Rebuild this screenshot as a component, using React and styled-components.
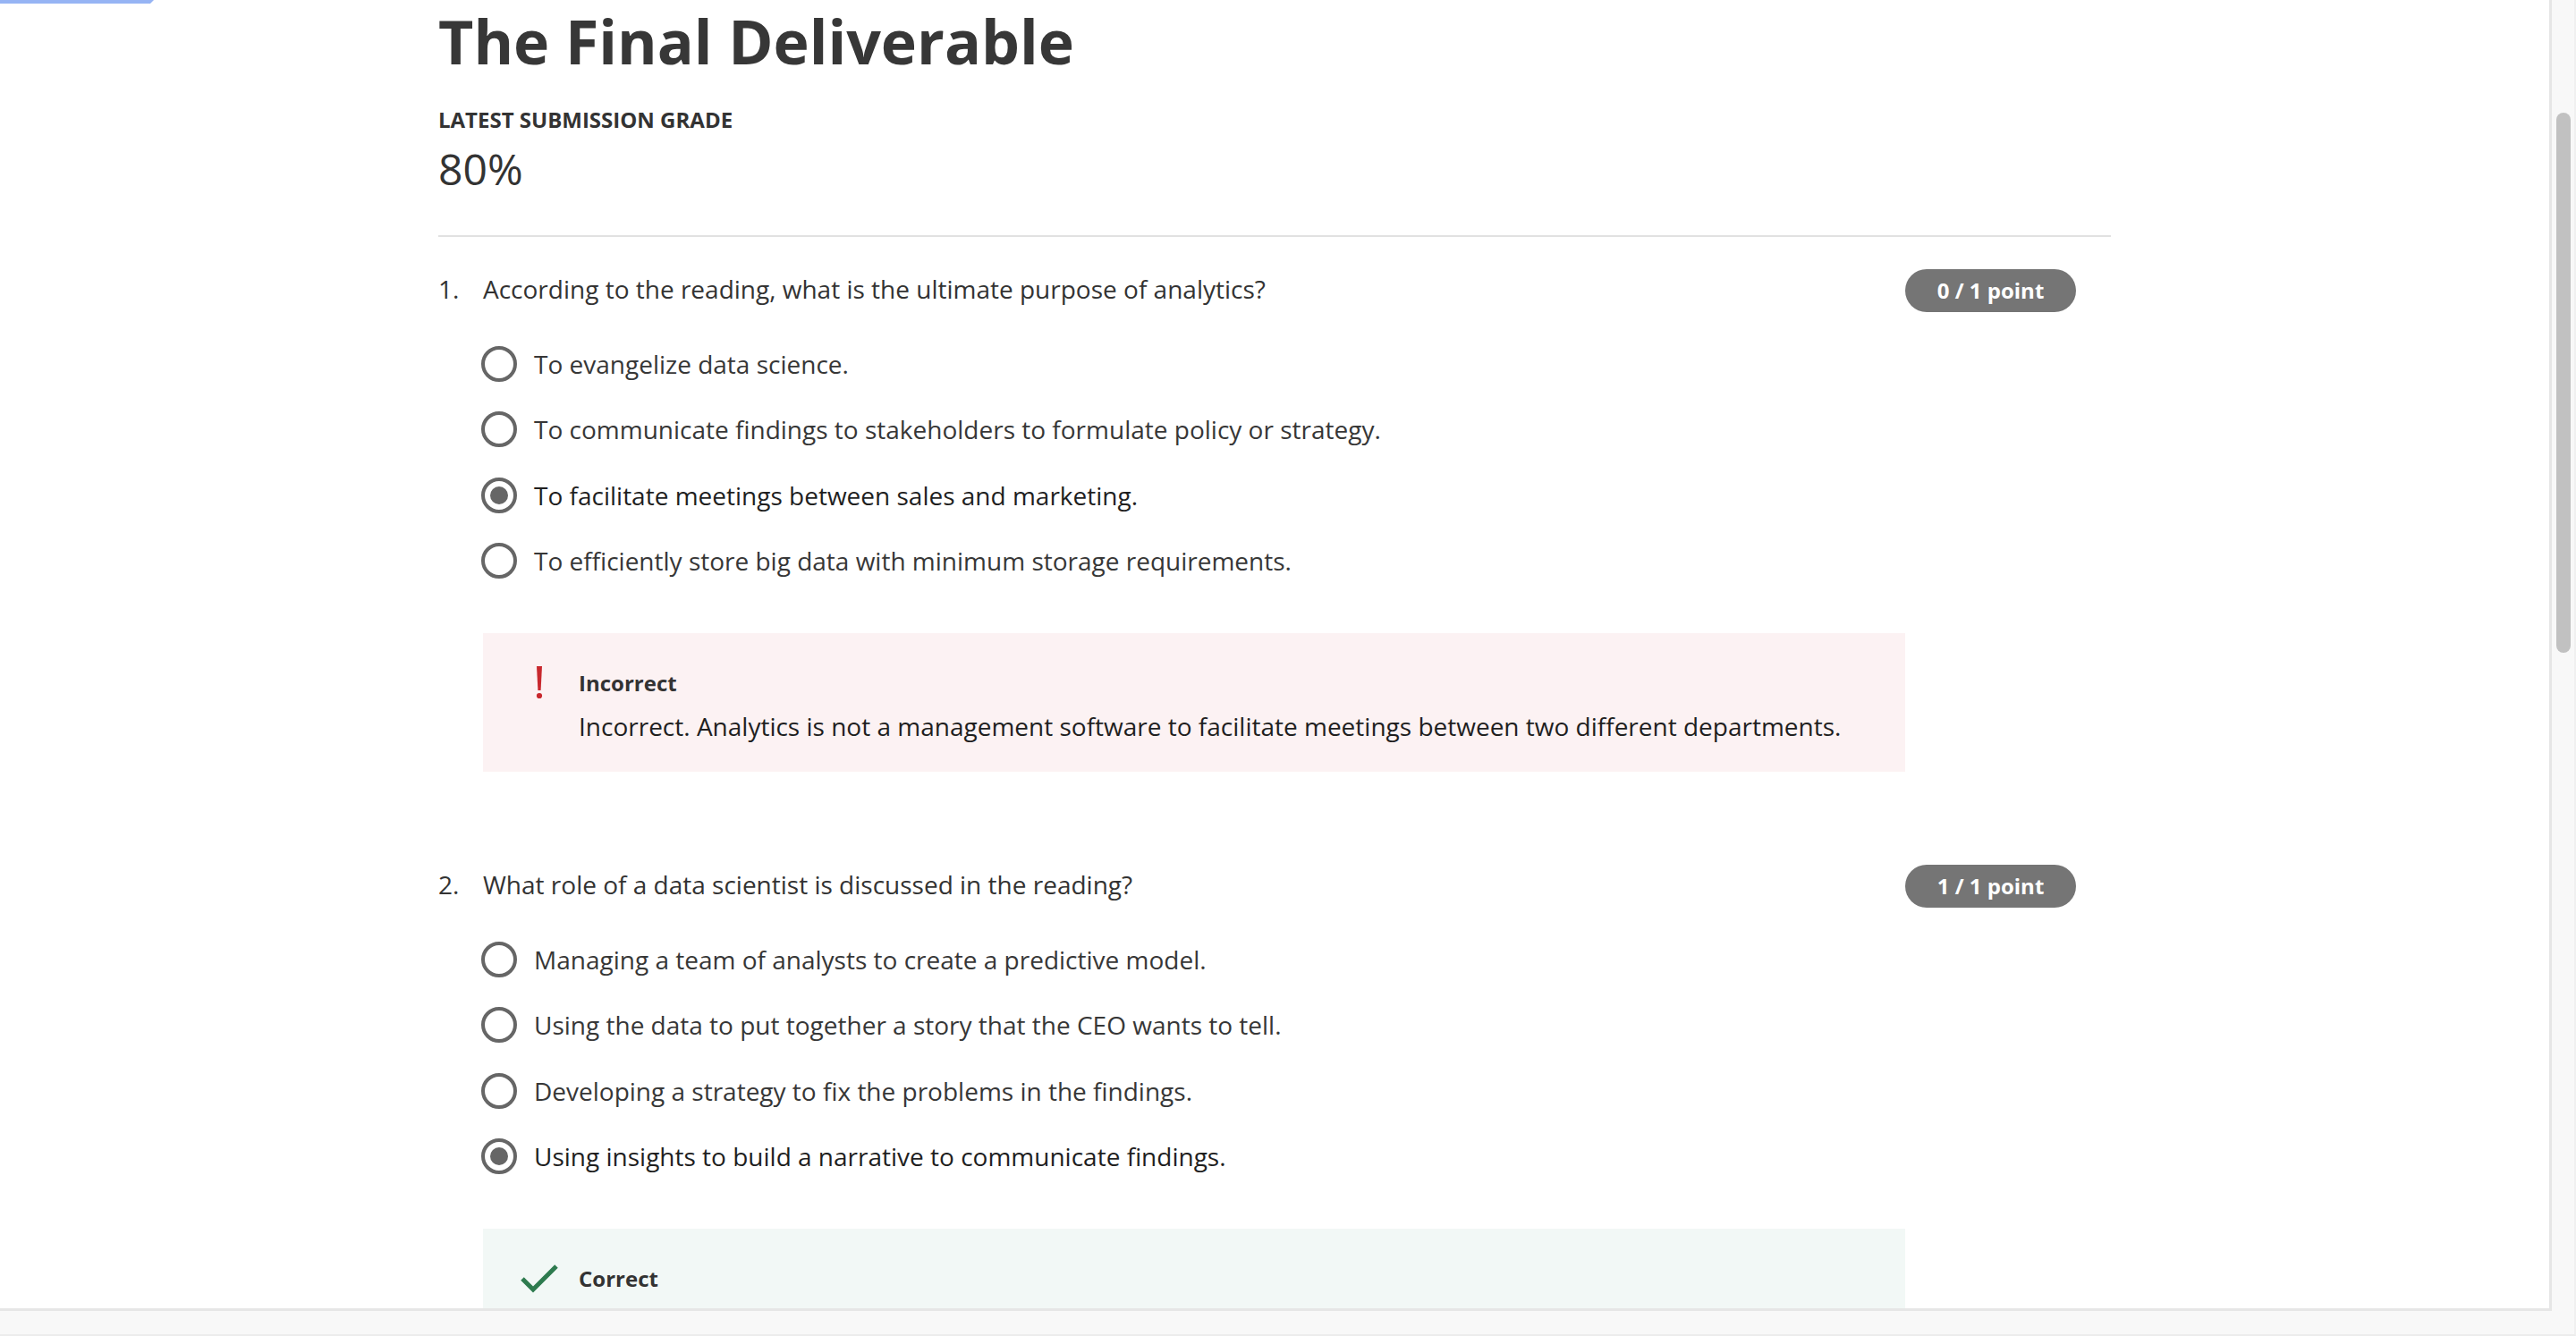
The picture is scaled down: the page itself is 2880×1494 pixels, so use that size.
import React from "react";
import styled, { createGlobalStyle } from "styled-components";

const Global = createGlobalStyle`
  html, body { margin: 0; padding: 0; background: #f8f8f8; }
  body { font-family: "Open Sans", "Liberation Sans", Arial, sans-serif; overflow: hidden; }
  * { box-sizing: border-box; }
`;

const Page = styled.div`
  position: relative;
  width: 2880px;
  height: 1494px;
  display: grid;
  grid-template-columns: 2853px 1fr;
  grid-template-rows: 1466px 1fr;
  background: #f8f8f8;
  border-right: 2px solid #f0f0f0;
  border-bottom: 2px solid #ececec;
`;

const FocusBar = styled.div`
  position: absolute;
  top: 0;
  left: 0;
  width: 172px;
  height: 4px;
  background: #96b4f4;
  clip-path: polygon(0 0, 100% 0, calc(100% - 4px) 100%, 0 100%);
  z-index: 2;
`;

const Pane = styled.main`
  background: #fff;
  border-right: 3px solid #e6e6e6;
  border-bottom: 3px solid #e6e6e6;
  overflow: hidden;
  display: flex;
  justify-content: center;
`;

const VTrack = styled.div`
  padding: 126px 4px 0 5px;
`;

const Thumb = styled.div`
  width: 16px;
  height: 604px;
  border-radius: 8px;
  background: #c1c1c1;
`;

const HTrack = styled.div`
  grid-column: 1 / span 2;
  background: #f8f8f8;
`;

const Column = styled.div`
  width: 1870px;
  padding-top: 6px;
  color: #333;
`;

const Title = styled.h1`
  margin: 0;
  font-size: 68px;
  line-height: 80px;
  font-weight: 700;
  color: #373737;
`;

const GradeLabel = styled.div`
  margin-top: 34px;
  font-size: 24px;
  line-height: 28px;
  font-weight: 700;
  color: #333;
`;

const GradeValue = styled.div`
  margin-top: 13px;
  font-size: 48px;
  line-height: 56px;
  font-weight: 400;
  color: #333;
`;

const Divider = styled.hr`
  margin: 46px 0 36px;
  border: 0;
  height: 2px;
  background: #e1e1e1;
`;

const Question = styled.section`
  display: grid;
  grid-template-columns: 50px 1590px 191px;
  margin-bottom: 104px;
`;

const Num = styled.div`
  font-size: 28px;
  line-height: 44px;
  color: #333;
`;

const Body = styled.div`
  display: flex;
  flex-direction: column;
`;

const Prompt = styled.div`
  font-size: 28px;
  line-height: 44px;
  color: #333;
  min-height: 48px;
`;

const Options = styled.div`
  margin-top: 21px;
  display: flex;
  flex-direction: column;
`;

const Option = styled.div`
  height: 73.5px;
  display: flex;
  align-items: center;
  gap: 19px;
  font-size: 28px;
  line-height: 40px;
  color: ${(p) => (p.$selected ? "#1f1f1f" : "#373737")};
`;

const Radio = styled.span`
  width: 40px;
  height: 40px;
  margin-left: -2px;
  border-radius: 50%;
  border: 4px solid #666;
  display: flex;
  align-items: center;
  justify-content: center;
  flex: none;
  &::after {
    content: "";
    width: 20px;
    height: 20px;
    border-radius: 50%;
    background: ${(p) => (p.$selected ? "#666" : "transparent")};
  }
`;

const Feedback = styled.div`
  margin-top: 44px;
  background: ${(p) => (p.$correct ? "#f2f8f6" : "#fcf2f3")};
  padding: 41px 40px 31px 50px;
  display: flex;
  align-items: flex-start;
`;

const IconBox = styled.div`
  width: 26px;
  height: 30px;
  margin-right: 31px;
  display: flex;
  align-items: center;
  justify-content: center;
  flex: none;
  overflow: visible;
`;

const FeedbackText = styled.div`
  display: flex;
  flex-direction: column;
`;

const FeedbackLabel = styled.div`
  font-size: 24px;
  line-height: 30px;
  font-weight: 700;
  color: #333;
`;

const FeedbackBody = styled.div`
  margin-top: 13px;
  font-size: 28px;
  line-height: 40px;
  color: #1f1f1f;
`;

const Badge = styled.div`
  height: 48px;
  border-radius: 24px;
  background: #757575;
  color: #fff;
  font-size: 24px;
  font-weight: 700;
  line-height: 48px;
  text-align: center;
`;

const Bang = () => (
  <svg width="12" height="40" viewBox="0 0 12 40" style={{ overflow: "visible" }}>
    <path d="M3 1 H9 L7.6 28 H4.4 Z" fill="#c8282d" />
    <circle cx="6" cy="34" r="3.1" fill="#c8282d" />
  </svg>
);

const Check = () => (
  <svg width="42" height="34" viewBox="0 0 42 34" style={{ overflow: "visible" }}>
    <path d="M2 17 L14 29 L40 3" fill="none" stroke="#2e7b4f" strokeWidth="5" />
  </svg>
);

const questions = [
  {
    n: "1.",
    prompt: "According to the reading, what is the ultimate purpose of analytics?",
    points: "0 / 1 point",
    options: [
      "To evangelize data science.",
      "To communicate findings to stakeholders to formulate policy or strategy.",
      "To facilitate meetings between sales and marketing.",
      "To efficiently store big data with minimum storage requirements.",
    ],
    selected: 2,
    correct: false,
    label: "Incorrect",
    text: "Incorrect. Analytics is not a management software to facilitate meetings between two different departments.",
  },
  {
    n: "2.",
    prompt: "What role of a data scientist is discussed in the reading?",
    points: "1 / 1 point",
    options: [
      "Managing a team of analysts to create a predictive model.",
      "Using the data to put together a story that the CEO wants to tell.",
      "Developing a strategy to fix the problems in the findings.",
      "Using insights to build a narrative to communicate findings.",
    ],
    selected: 3,
    correct: true,
    label: "Correct",
    text: "Correct. A data scientist uses insights to build a narrative that communicates findings to stakeholders.",
  },
];

export default function App() {
  return (
    <>
      <Global />
      <Page>
        <FocusBar />
        <Pane>
          <Column>
            <Title>The Final Deliverable</Title>
            <GradeLabel>LATEST SUBMISSION GRADE</GradeLabel>
            <GradeValue>80%</GradeValue>
            <Divider />
            {questions.map((q) => (
              <Question key={q.n}>
                <Num>{q.n}</Num>
                <Body>
                  <Prompt>{q.prompt}</Prompt>
                  <Options>
                    {q.options.map((o, i) => (
                      <Option key={o} $selected={i === q.selected}>
                        <Radio $selected={i === q.selected} />
                        <span>{o}</span>
                      </Option>
                    ))}
                  </Options>
                  <Feedback $correct={q.correct}>
                    <IconBox>{q.correct ? <Check /> : <Bang />}</IconBox>
                    <FeedbackText>
                      <FeedbackLabel>{q.label}</FeedbackLabel>
                      <FeedbackBody>{q.text}</FeedbackBody>
                    </FeedbackText>
                  </Feedback>
                </Body>
                <Badge>{q.points}</Badge>
              </Question>
            ))}
          </Column>
        </Pane>
        <VTrack>
          <Thumb />
        </VTrack>
        <HTrack />
      </Page>
    </>
  );
}
